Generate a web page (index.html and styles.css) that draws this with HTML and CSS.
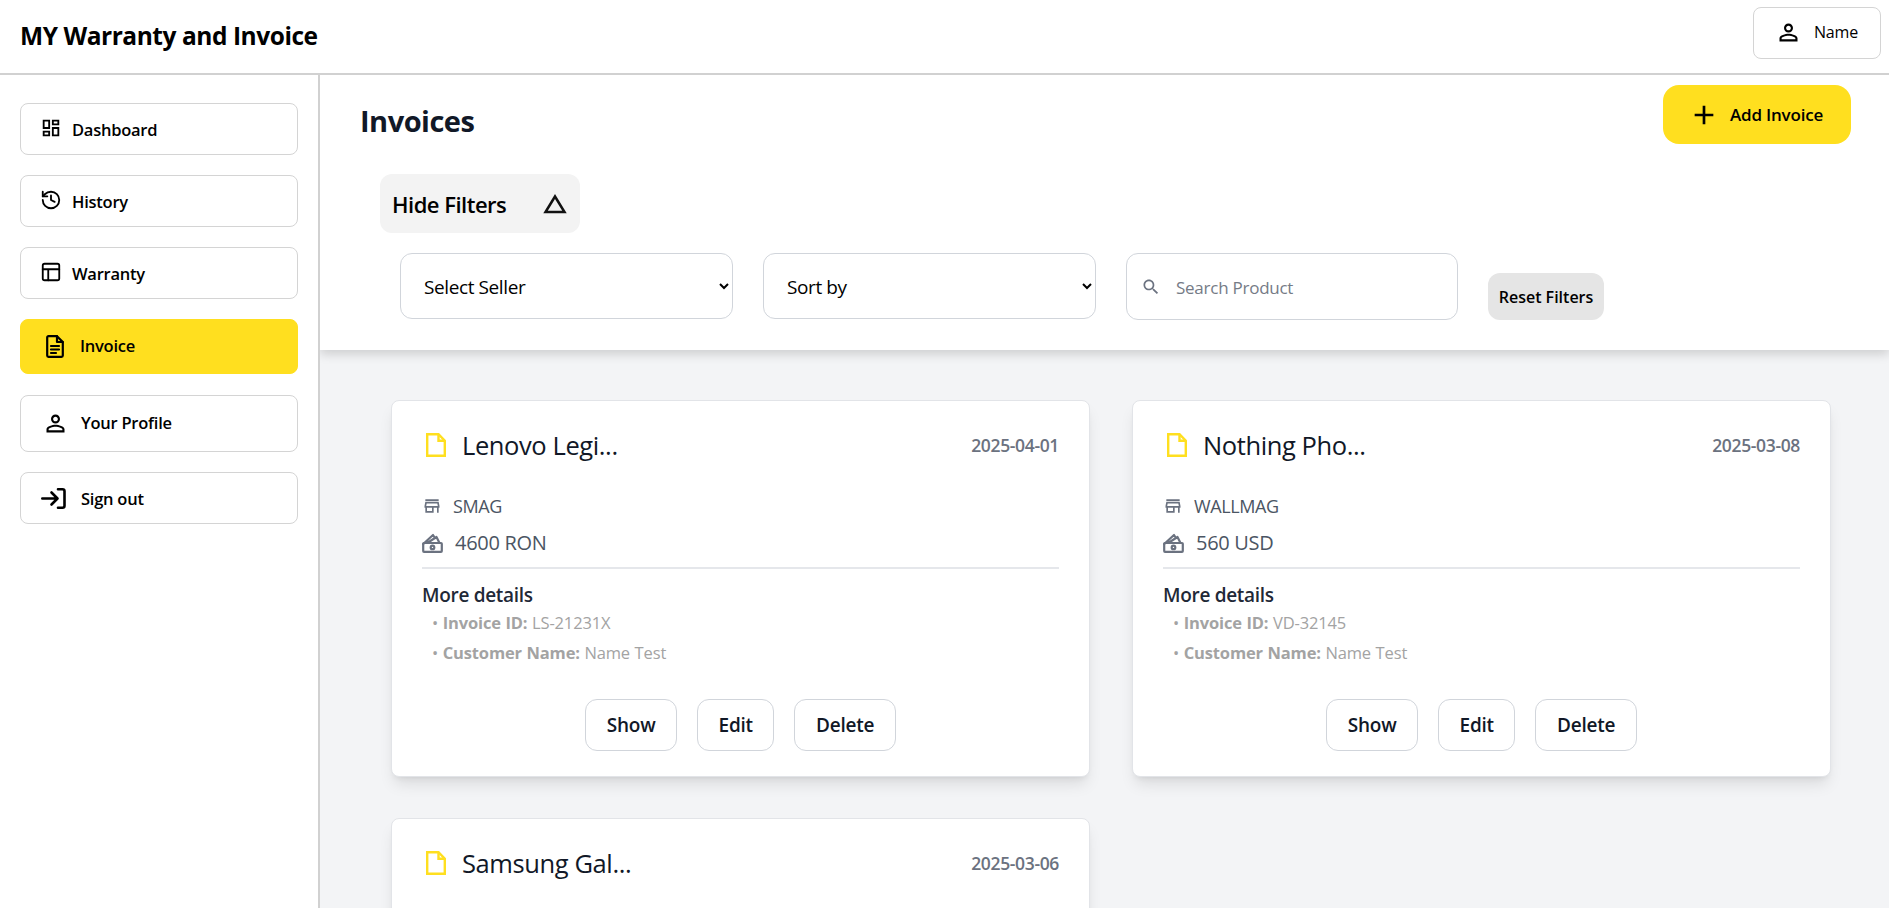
FILE: index.html
```html
<!DOCTYPE html>
<html lang="en">
<head>
<meta charset="utf-8">
<title>MY Warranty and Invoice</title>
<link rel="stylesheet" href="styles.css">
</head>
<body>
<header class="topbar">
  <h1 class="brand">MY Warranty and Invoice</h1>
  <button class="name-btn">
    <svg class="ic-person" viewBox="0 0 24 24"><path d="M12 5.9c1.16 0 2.1.94 2.1 2.1s-.94 2.1-2.1 2.1S9.9 9.16 9.9 8s.94-2.1 2.1-2.1m0 9c2.97 0 6.1 1.46 6.1 2.1v1.1H5.9V17c0-.64 3.13-2.1 6.1-2.1M12 4C9.79 4 8 5.79 8 8s1.79 4 4 4 4-1.79 4-4-1.79-4-4-4zm0 9c-2.67 0-8 1.34-8 4v3h16v-3c0-2.66-5.33-4-8-4z"/></svg>
    <span>Name</span>
  </button>
</header>
<div class="shell">
  <aside class="sidebar">
    <a class="nav nav-small">
      <svg class="ic22" viewBox="0 0 24 24"><path d="M19 5v2h-4V5h4M9 5v6H5V5h4m10 8v6h-4v-6h4M9 17v2H5v-2h4M21 3h-8v6h8V3zM11 3H3v10h8V3zm10 8h-8v10h8V11zm-10 4H3v6h8v-6z"/></svg>
      <span>Dashboard</span>
    </a>
    <a class="nav nav-small">
      <svg class="ic22 line" viewBox="0 0 24 24"><path d="M3 12a9 9 0 1 0 9-9 9.75 9.75 0 0 0-6.74 2.74L3 8"/><path d="M3 3v5h5"/><path d="M12 7v5l4 2"/></svg>
      <span>History</span>
    </a>
    <a class="nav nav-small">
      <svg class="ic22 line" viewBox="0 0 24 24"><rect x="3" y="3" width="18" height="18" rx="2"/><path d="M3 9h18M9 21V9"/></svg>
      <span>Warranty</span>
    </a>
    <a class="nav nav-active">
      <svg class="ic-invoice line" viewBox="0 0 18 23"><path d="M11 1.2H2.5a1.3 1.3 0 0 0-1.3 1.3v18a1.3 1.3 0 0 0 1.3 1.3h13a1.3 1.3 0 0 0 1.3-1.3V7z"/><path d="M11 1.2v5.8h5.8M5 11h8M5 14.5h8M5 18h5"/></svg>
      <span>Invoice</span>
    </a>
    <a class="nav nav-big">
      <svg class="ic-person" viewBox="0 0 24 24"><path d="M12 5.9c1.16 0 2.1.94 2.1 2.1s-.94 2.1-2.1 2.1S9.9 9.16 9.9 8s.94-2.1 2.1-2.1m0 9c2.97 0 6.1 1.46 6.1 2.1v1.1H5.9V17c0-.64 3.13-2.1 6.1-2.1M12 4C9.79 4 8 5.79 8 8s1.79 4 4 4 4-1.79 4-4-1.79-4-4-4zm0 9c-2.67 0-8 1.34-8 4v3h16v-3c0-2.66-5.33-4-8-4z"/></svg>
      <span>Your Profile</span>
    </a>
    <a class="nav nav-signout">
      <svg class="ic-sign line" viewBox="0 0 25 21"><path d="M1.3 10.5h15M10.5 4.5l6 6-6 6"/><path d="M17 1.3h4.5a2 2 0 0 1 2 2v14.4a2 2 0 0 1-2 2H17"/></svg>
      <span>Sign out</span>
    </a>
  </aside>
  <main class="main">
    <section class="panel">
      <div class="panel-head">
        <h2 class="title">Invoices</h2>
        <button class="add-btn">
          <svg class="ic-plus" viewBox="0 0 24 24"><path d="M19 13h-6v6h-2v-6H5v-2h6V5h2v6h6v2z"/></svg>
          <span>Add Invoice</span>
        </button>
      </div>
      <button class="toggle">
        <span>Hide Filters</span>
        <svg class="ic-tri" viewBox="0 0 24 24"><path d="M12 4.5 21.5 20h-19z"/></svg>
      </button>
      <div class="filters">
        <select class="field"><option>Select Seller</option></select>
        <select class="field"><option>Sort by</option></select>
        <label class="search">
          <svg class="ic-search" viewBox="0 0 24 24"><path d="M15.5 14h-.79l-.28-.27C15.41 12.59 16 11.11 16 9.5 16 5.91 13.09 3 9.5 3S3 5.91 3 9.5 5.91 16 9.5 16c1.61 0 3.09-.59 4.23-1.57l.27.28v.79l5 4.99L20.49 19l-4.99-5zm-6 0C7.01 14 5 11.99 5 9.5S7.01 5 9.5 5 14 7.01 14 9.5 11.99 14 9.5 14z"/></svg>
          <input class="search-input" placeholder="Search Product">
        </label>
        <button class="reset">Reset Filters</button>
      </div>
    </section>
    <section class="grid">
      <article class="card">
        <div class="card-head">
          <svg class="ic-doc" viewBox="0 0 20 24"><path d="M1.2 1.2h11.3l6.3 6.5v15.1H1.2z"/><path d="M12.5 1.2v6.5h6.3"/></svg>
          <h3 class="card-title">Lenovo Legi...</h3>
          <span class="date">2025-04-01</span>
        </div>
        <div class="seller">
          <svg class="ic-store" viewBox="0 0 24 24"><path d="M20 4H4v2h16V4zm0 3H4l-1 5v2h1v6h10v-6h4v6h2v-6h1v-2l-1-5zm-8 11H6v-4h6v4zm-6.96-6l.6-3h12.72l.6 3H5.04z"/></svg>
          <span>SMAG</span>
        </div>
        <div class="price">
          <svg class="ic-cash line" viewBox="0 0 21 20"><path d="M1.2 11 11 2l2 3M6 9.5 14.5 4l2.5 5"/><rect x="1.2" y="10" width="18.6" height="8.8" rx=".8"/><circle cx="10.5" cy="14.4" r="1.8"/></svg>
          <span>4600 RON</span>
        </div>
        <div class="details">
          <h4 class="details-title">More details</h4>
          <p class="line-item">• <b>Invoice ID:</b> LS-21231X</p>
          <p class="line-item">• <b>Customer Name:</b> Name Test</p>
        </div>
        <div class="actions">
          <button class="act">Show</button><button class="act">Edit</button><button class="act">Delete</button>
        </div>
      </article>
      <article class="card">
        <div class="card-head">
          <svg class="ic-doc" viewBox="0 0 20 24"><path d="M1.2 1.2h11.3l6.3 6.5v15.1H1.2z"/><path d="M12.5 1.2v6.5h6.3"/></svg>
          <h3 class="card-title">Nothing Pho...</h3>
          <span class="date">2025-03-08</span>
        </div>
        <div class="seller">
          <svg class="ic-store" viewBox="0 0 24 24"><path d="M20 4H4v2h16V4zm0 3H4l-1 5v2h1v6h10v-6h4v6h2v-6h1v-2l-1-5zm-8 11H6v-4h6v4zm-6.96-6l.6-3h12.72l.6 3H5.04z"/></svg>
          <span>WALLMAG</span>
        </div>
        <div class="price">
          <svg class="ic-cash line" viewBox="0 0 21 20"><path d="M1.2 11 11 2l2 3M6 9.5 14.5 4l2.5 5"/><rect x="1.2" y="10" width="18.6" height="8.8" rx=".8"/><circle cx="10.5" cy="14.4" r="1.8"/></svg>
          <span>560 USD</span>
        </div>
        <div class="details">
          <h4 class="details-title">More details</h4>
          <p class="line-item">• <b>Invoice ID:</b> VD-32145</p>
          <p class="line-item">• <b>Customer Name:</b> Name Test</p>
        </div>
        <div class="actions">
          <button class="act">Show</button><button class="act">Edit</button><button class="act">Delete</button>
        </div>
      </article>
      <article class="card">
        <div class="card-head">
          <svg class="ic-doc" viewBox="0 0 20 24"><path d="M1.2 1.2h11.3l6.3 6.5v15.1H1.2z"/><path d="M12.5 1.2v6.5h6.3"/></svg>
          <h3 class="card-title">Samsung Gal...</h3>
          <span class="date">2025-03-06</span>
        </div>
      </article>
    </section>
  </main>
</div>
</body>
</html>
```
FILE: styles.css
```css
* { box-sizing: border-box; }
html, body { margin: 0; height: 100%; overflow: hidden; }
body {
  display: flex;
  flex-direction: column;
  font-family: "Open Sans", "Noto Sans", sans-serif;
  color: #000;
  background: #fff;
}
button, select, input { font-family: inherit; }
svg { display: block; flex: none; fill: currentColor; }
.line { fill: none; stroke: currentColor; stroke-width: 2; stroke-linecap: round; stroke-linejoin: round; }
.ic22 { width: 22px; height: 22px; }
.ic-person { width: 27px; height: 27px; }

.topbar {
  height: 75px;
  flex: none;
  display: flex;
  align-items: flex-start;
  justify-content: space-between;
  padding: 7px 8px 0 20px;
  border-bottom: 2px solid #d1d1d1;
}
.brand { margin: 12px 0 0; font-size: 24.5px; line-height: 33px; font-weight: 700; letter-spacing: -.45px; }
.name-btn {
  width: 128px;
  height: 52px;
  display: flex;
  align-items: center;
  gap: 12px;
  padding: 0 0 2px 21px;
  background: #fff;
  border: 1px solid #d4d4d4;
  border-radius: 8px;
  font-size: 16px;
  letter-spacing: -.2px;
  color: #000;
}

.shell { flex: 1; min-height: 0; display: flex; }
.sidebar {
  width: 320px;
  flex: none;
  display: flex;
  flex-direction: column;
  padding: 28px 20px 0;
  border-right: 2px solid #d1d1d1;
}
.nav {
  width: 278px;
  display: flex;
  align-items: center;
  border: 1px solid #d4d4d4;
  border-radius: 8px;
  font-size: 16.5px;
  font-weight: 600;
  letter-spacing: -.25px;
}
.nav-small { height: 52px; margin-bottom: 20px; padding-left: 19px; gap: 10px; }
.nav-small svg { margin-top: -3px; }
.nav-active { height: 55px; margin-bottom: 21px; padding: 0 0 2px 25px; gap: 16px; background: #ffdf1f; border-color: #ffdf1f; }
.ic-invoice { width: 18px; height: 23px; stroke-width: 2.2; margin-top: 2px; }
.nav-big { height: 57px; margin-bottom: 20px; padding: 0 0 2px 21px; gap: 12px; }
.nav-big svg { margin-top: 2px; }
.nav-signout { height: 52px; padding-left: 20px; gap: 15px; }
.ic-sign { width: 25px; height: 21px; stroke-width: 2.6; }

.main { flex: 1; min-width: 0; display: flex; flex-direction: column; background: #f3f4f6; overflow: hidden; }
.panel {
  flex: none;
  height: 275px;
  padding: 10px 38px 0 40px;
  background: #fff;
  box-shadow: 0 4px 10px rgba(0,0,0,.16);
  position: relative;
}
.panel-head { display: flex; justify-content: space-between; align-items: flex-start; }
.title { margin: 16px 0 0; font-size: 29px; line-height: 40px; font-weight: 700; color: #111827; letter-spacing: -.5px; }
.add-btn {
  width: 188px;
  height: 59px;
  display: flex;
  align-items: center;
  gap: 10px;
  padding: 0 0 0 25px;
  border: 0;
  border-radius: 16px;
  background: #ffdf1f;
  color: #000;
  font-size: 17px;
  font-weight: 600;
  letter-spacing: -.2px;
}
.ic-plus { width: 32px; height: 32px; }
.toggle {
  width: 200px;
  height: 59px;
  margin: 30px 0 0 20px;
  padding: 0 13px 0 12px;
  display: flex;
  align-items: center;
  justify-content: space-between;
  border: 0;
  border-radius: 12px;
  background: #f3f3f3;
  color: #000;
  font-size: 22px;
  font-weight: 600;
  letter-spacing: -.5px;
}
.ic-tri { width: 24px; height: 24px; fill: none; stroke: #111; stroke-width: 2.5; }
.filters { display: flex; align-items: flex-start; gap: 30px; margin: 20px 0 0 40px; }
.field {
  width: 333px;
  height: 66px;
  padding: 2px 0 0 19px;
  background: #fff;
  border: 1px solid #d1d5db;
  border-radius: 12px;
  font-size: 19px;
  letter-spacing: -.4px;
  color: #000;
}
.search {
  width: 332px;
  height: 67px;
  display: flex;
  align-items: center;
  gap: 15px;
  padding-left: 14px;
  background: #fff;
  border: 1px solid #d1d5db;
  border-radius: 12px;
  color: #6b7280;
}
.ic-search { width: 20px; height: 20px; }
.search-input { flex: 1; min-width: 0; border: 0; outline: 0; padding: 2px 0 0; font-size: 17px; letter-spacing: -.25px; background: transparent; }
.search-input::placeholder { color: #757b86; opacity: 1; }
.reset {
  width: 116px;
  height: 47px;
  margin: 20px 0 0;
  padding: 0;
  border: 0;
  border-radius: 12px;
  background: #e5e5e5;
  color: #000;
  font-size: 16px;
  font-weight: 600;
  letter-spacing: 0;
}

.grid {
  display: grid;
  grid-template-columns: 699px 699px;
  column-gap: 42px;
  row-gap: 41px;
  padding: 50px 0 0 71px;
  align-content: start;
}
.card {
  height: 377px;
  padding: 0 30px;
  background: #fff;
  border: 1px solid #e2e4e8;
  border-radius: 8px;
  box-shadow: 0 10px 15px -3px rgba(0,0,0,.1), 0 4px 6px -4px rgba(0,0,0,.1);
}
.card-head { height: 87px; display: flex; align-items: center; color: #111827; }
.ic-doc { width: 20px; height: 24px; margin: 0 16px 0 4px; fill: none; stroke: #ffdf1f; stroke-width: 2.4; }
.card-title { flex: 1; margin: 0; font-size: 25.5px; font-weight: 500; letter-spacing: -.4px; line-height: 34px; }
.date { font-size: 17.5px; font-weight: 600; color: #6b7280; letter-spacing: -.35px; }
.seller { display: flex; align-items: center; gap: 11px; margin-top: 6px; height: 24px; font-size: 18px; letter-spacing: -.4px; color: #4b5563; }
.ic-store { width: 20px; height: 20px; color: #6b7280; }
.price { display: flex; align-items: center; gap: 12px; margin-top: 12px; padding-bottom: 12px; height: 39px; border-bottom: 2px solid #e5e7eb; font-size: 20px; letter-spacing: -.3px; color: #4b5563; }
.ic-cash { width: 21px; height: 20px; color: #6b7280; stroke-width: 2.2; }
.details { margin-top: 13px; }
.details-title { margin: 0; font-size: 19px; line-height: 26px; font-weight: 600; color: #1f2937; letter-spacing: -.3px; }
.line-item { margin: 0 0 0 10px; font-size: 16.5px; line-height: 30px; color: #a3a3a3; letter-spacing: -.15px; word-spacing: .5px; }
.line-item b { font-weight: 700; }
.actions { display: flex; justify-content: center; gap: 20px; margin-top: 31px; }
.act {
  height: 52px;
  padding: 0 20.5px;
  background: #fff;
  border: 1px solid #d1d5db;
  border-radius: 12px;
  font-size: 19px;
  font-weight: 600;
  color: #111827;
  letter-spacing: -.2px;
}
```
